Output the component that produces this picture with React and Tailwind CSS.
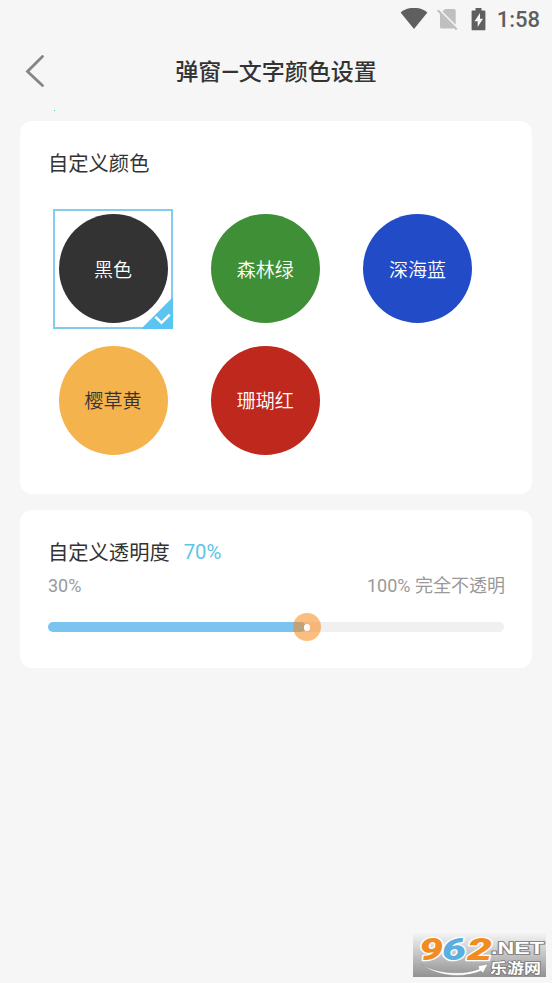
import React, { useState } from "react";

const colors = [
    { name: "黑色", circle: "bg-[#333333] text-white" },
    { name: "森林绿", circle: "bg-[#3f8f37] text-white" },
    { name: "深海蓝", circle: "bg-[#224bc8] text-white" },
    { name: "樱草黄", circle: "bg-[#f5b34d] text-[#333333]" },
    { name: "珊瑚红", circle: "bg-[#bf281c] text-white" },
];

function StatusBar() {
    return (
        <div className="flex h-[38px] items-center justify-end pr-3 text-[#5f5f5f]">
            {/* wifi */}
            <svg width="28" height="22" viewBox="0 0 28 22" fill="currentColor">
                <path d="M14 20.900 0.6 4.600C4.400 1.200 9-.2 14-.2s9.600 1.400 13.400 4.800z" />
            </svg>
            {/* no sim */}
            <svg
                className="ml-[9px]"
                width="21"
                height="23"
                viewBox="0 0 21 23"
            >
                <path
                    d="M8 1H17a1.700 1.700 0 0 1 1.700 1.700V16.800L5.500 3.600zM3 5.500 17.800 20.600H4.700A1.700 1.700 0 0 1 3 18.900z"
                    fill="#bfbfbf"
                />
                <path
                    d="M.8 2.200 19.800 21.500"
                    stroke="#bfbfbf"
                    strokeWidth="2"
                    fill="none"
                />
            </svg>
            {/* battery */}
            <svg
                className="ml-[13px]"
                width="15"
                height="23"
                viewBox="0 0 15 23"
                fill="currentColor"
            >
                <path
                    fillRule="evenodd"
                    d="M4.500 0h6v2.400H13.500c.5 0 .9.400.9.900v18.100c0 .5-.4.9-.9.900h-12c-.5 0-.9-.4-.9-.9V3.300c0-.5.4-.9.9-.900h3zM9 5 3.500 13.300h3.200v5.700L12 10.700H9z"
                />
            </svg>
            <span className="mt-px ml-[11px] text-[22px] leading-none font-medium">
                1:58
            </span>
        </div>
    );
}

function ColorItem({ color, selected, onSelect }) {
    return (
        <button
            onClick={onSelect}
            className={`relative flex h-[120px] w-[120px] items-center justify-center border-2 ${
                selected ? "border-[#83cdec]" : "border-transparent"
            }`}
        >
            <span
                className={`-mt-px flex h-[109px] w-[109px] shrink-0 items-center justify-center rounded-full pt-[3px] text-[19px] leading-none font-[350] ${color.circle}`}
            >
                {color.name}
            </span>
            {selected && (
                <svg
                    className="absolute -right-[2px] -bottom-[2px]"
                    width="32"
                    height="32"
                    viewBox="0 0 32 32"
                >
                    <path d="M32 0V32H0z" fill="#5bc4f1" />
                    <path
                        d="m14.500 19.800 6 6 8.200-8.200"
                        stroke="#fff"
                        strokeWidth="2.500"
                        fill="none"
                    />
                </svg>
            )}
        </button>
    );
}

function Watermark() {
    return (
        <svg
            className="absolute top-[925px] left-[413px]"
            width="139"
            height="58"
            viewBox="0 -8 139 58"
        >
            <defs>
                <linearGradient id="plate" x1="0" y1="0" x2="0" y2="1">
                    <stop offset="0" stopColor="#f4f4f4" />
                    <stop offset="1" stopColor="#929292" />
                </linearGradient>
            </defs>
            <rect width="133" height="44" fill="url(#plate)" />
            <g
                fontFamily="Roboto, sans-serif"
                fontWeight="900"
                fontStyle="italic"
                fontSize="32"
                stroke="#fff"
                strokeWidth="2.500"
                strokeLinejoin="round"
                paintOrder="stroke"
            >
                <text x="6" y="27" fill="#f28c22" textLength="24" lengthAdjust="spacingAndGlyphs">9</text>
                <text x="29" y="27" fill="#5aaee0" textLength="24" lengthAdjust="spacingAndGlyphs">6</text>
                <text x="54" y="27" fill="#f28c22" textLength="25" lengthAdjust="spacingAndGlyphs">2</text>
            </g>
            <text
                x="78"
                y="20.500"
                fontSize="16.500"
                fontWeight="bold"
                fontFamily="Liberation Sans, sans-serif"
                fill="#fff"
                stroke="#858585"
                strokeWidth="2"
                strokeLinejoin="round"
                paintOrder="stroke"
                textLength="53"
                lengthAdjust="spacingAndGlyphs"
            >
                .NET
            </text>
            <path
                d="M8 31C22 40 48 43 66 36L65 33L75 31L70 40L68 38C48 46 23 43 8 31z"
                fill="#fff"
                stroke="#8b8b8b"
                strokeWidth=".5"
            />
            <text
                x="77"
                y="40.300"
                fontSize="14"
                fontWeight="bold"
                fontFamily="Noto Sans CJK SC, sans-serif"
                fill="#fff"
                stroke="#777"
                strokeWidth="1.500"
                paintOrder="stroke"
                textLength="51"
                lengthAdjust="spacingAndGlyphs"
            >
                乐游网
            </text>
        </svg>
    );
}

function App() {
    const [selected, setSelected] = useState(0);
    const [opacity] = useState(70);

    // The slider runs from 30% to 100%
    const progress = ((opacity - 30) / 70) * 100 - 0.5;

    return (
        <div className="relative h-[983px] w-[552px] overflow-hidden bg-[#f6f6f6] font-['Roboto','Noto_Sans_CJK_SC',sans-serif] text-[#333333]">
            <StatusBar />

            <header className="relative flex h-[66px] items-center justify-center">
                <svg
                    className="absolute top-[16px] left-[24px]"
                    width="22"
                    height="34"
                    viewBox="0 0 22 34"
                    fill="none"
                    stroke="#858585"
                    strokeWidth="2.800"
                    strokeLinecap="round"
                >
                    <path d="M18.500 2.500 3.500 17.500 18.500 31.500" />
                </svg>
                <h1 className="pt-[2px] text-[23px] leading-none font-medium">
                    弹窗—文字颜色设置
                </h1>
                <span className="absolute top-[72px] left-[54px] h-px w-px bg-[#3fd0b0]" />
            </header>

            <main className="flex flex-col gap-4 px-5 pt-[17px]">
                <section className="h-[373px] rounded-xl bg-white px-7 pt-[29px]">
                    <h2 className="text-[20.3px] leading-[28px]">
                        自定义颜色
                    </h2>
                    <div className="mt-[31px] ml-[5px] grid grid-cols-[repeat(3,120px)] gap-x-[32.300px] gap-y-[11.500px]">
                        {colors.map((color, index) => (
                            <ColorItem
                                key={color.name}
                                color={color}
                                selected={selected === index}
                                onSelect={() => setSelected(index)}
                            />
                        ))}
                    </div>
                </section>

                <section className="h-[158px] rounded-xl bg-white px-7 pt-[28px]">
                    <h2 className="flex h-7 items-center text-[20.3px] leading-[28px]">
                        <span className="pt-[2px]">自定义透明度</span>
                        <span className="ml-[14px] text-[#5dc5e8]">
                            {opacity}%
                        </span>
                    </h2>
                    <div className="mt-[7px] -mr-px flex justify-between text-[18px] leading-[26px] text-[#999999]">
                        <span>30%</span>
                        <span>100% 完全不透明</span>
                    </div>
                    <div className="relative mt-[23px] h-[10px] rounded-full bg-[#f0f0f0]">
                        <div
                            className="h-full rounded-full bg-[#7bc4f0]"
                            style={{ width: `${progress}%` }}
                        />
                        <div
                            className="absolute top-1/2 ml-[0.5px] flex h-7 w-7 -translate-x-1/2 -translate-y-1/2 items-center justify-center rounded-full bg-[#f98718]/55"
                            style={{ left: `${progress}%` }}
                        >
                            <span className="h-[7px] w-[6px] rounded-full bg-white" />
                        </div>
                    </div>
                </section>
            </main>

            <Watermark />
        </div>
    );
}

export default App;
